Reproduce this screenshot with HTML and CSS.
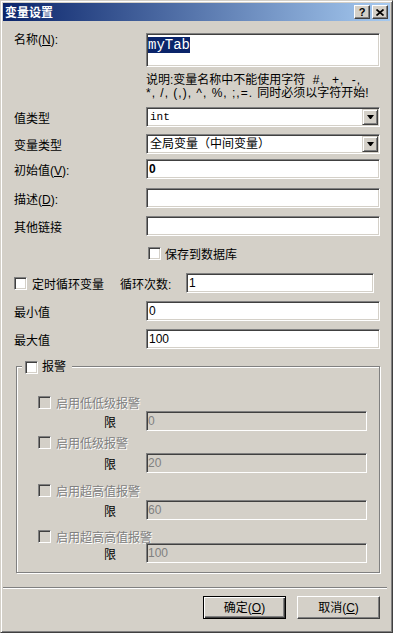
FILE: index.html
```html
<!DOCTYPE html>
<html lang="zh-CN">
<head>
    <meta charset="UTF-8">
    <meta name="viewport" content="width=device-width, initial-scale=1.0">
    <title>变量设置</title>
    <link rel="stylesheet" href="styles.css">
</head>
<body>
    <div class="window">
        <div class="titlebar">
            <span class="title">变量设置</span>
            <div class="title-buttons">
                <span class="tbtn help">?</span>
                <span class="tbtn close">
                    <svg width="8" height="7" viewBox="0 0 8 7"><path d="M0.5 0.5L7.5 6.5M7.5 0.5L0.5 6.5" stroke="#000" stroke-width="1.7" fill="none"/></svg>
                </span>
            </div>
        </div>

        <div class="dialog">
            <div class="row row-name">
                <span class="label">名称(<u>N</u>):</span>
                <div class="field field-name"><span class="selected">myTab</span></div>
            </div>
            <p class="note">说明:变量名称中不能使用字符<span class="chars"> #, +, -,</span><br><span class="chars tight">*, /, (,), ^, %, ;,=. </span>同时必须以字符开始!</p>

            <div class="row row-valtype">
                <span class="label">值类型</span>
                <div class="field select">
                    <span class="value mono">int</span>
                    <span class="drop"><span class="arrow"></span></span>
                </div>
            </div>
            <div class="row row-vartype">
                <span class="label">变量类型</span>
                <div class="field select">
                    <span class="value">全局变量（中间变量）</span>
                    <span class="drop"><span class="arrow"></span></span>
                </div>
            </div>
            <div class="row row-init">
                <span class="label">初始值(<u>V</u>):</span>
                <div class="field"><b>0</b></div>
            </div>
            <div class="row row-desc">
                <span class="label">描述(<u>D</u>):</span>
                <div class="field"></div>
            </div>
            <div class="row row-link">
                <span class="label">其他链接</span>
                <div class="field"></div>
            </div>
            <div class="row row-save">
                <span class="check"></span>
                <span class="check-text">保存到数据库</span>
            </div>

            <div class="row row-loop">
                <div class="loop-check">
                    <span class="check"></span>
                    <span class="check-text">定时循环变量</span>
                </div>
                <span class="loop-label">循环次数:</span>
                <div class="field loop-field">1</div>
            </div>
            <div class="row row-min">
                <span class="label">最小值</span>
                <div class="field">0</div>
            </div>
            <div class="row row-max">
                <span class="label">最大值</span>
                <div class="field">100</div>
            </div>

            <div class="group">
                <div class="legend">
                    <span class="check"></span>
                    <span>报警</span>
                </div>

                <div class="alarm alarm-1">
                    <span class="check off"></span>
                    <span class="disabled">启用低低级报警</span>
                </div>
                <div class="limit limit-1">
                    <span class="label">限</span>
                    <div class="field off">0</div>
                </div>

                <div class="alarm alarm-2">
                    <span class="check off"></span>
                    <span class="disabled">启用低级报警</span>
                </div>
                <div class="limit limit-2">
                    <span class="label">限</span>
                    <div class="field off">20</div>
                </div>

                <div class="alarm alarm-3">
                    <span class="check off"></span>
                    <span class="disabled">启用超高值报警</span>
                </div>
                <div class="limit limit-3">
                    <span class="label">限</span>
                    <div class="field off">60</div>
                </div>

                <div class="alarm alarm-4">
                    <span class="check off"></span>
                    <span class="disabled">启用超高高值报警</span>
                </div>
                <div class="limit limit-4">
                    <span class="label">限</span>
                    <div class="field off">100</div>
                </div>
            </div>

            <div class="separator"></div>

            <div class="buttons">
                <button class="btn default">确定(<u>O</u>)</button>
                <button class="btn">取消(<u>C</u>)</button>
            </div>
        </div>
    </div>
</body>
</html>
```

FILE: styles.css
```css
* {
    margin: 0;
    padding: 0;
    box-sizing: border-box;
}

body {
    background: #d4d0c8;
    font-family: "Liberation Sans", "Noto Sans CJK SC", sans-serif;
    font-size: 12px;
    color: #000;
}

.window {
    width: 393px;
    height: 633px;
    background: #d4d0c8;
    border: 1px solid;
    border-color: #d4d0c8 #404040 #404040 #d4d0c8;
    box-shadow: inset 1px 1px #fff, inset -1px -1px #808080;
    padding: 2px;
    display: flex;
    flex-direction: column;
}

/* title bar */
.titlebar {
    height: 18px;
    flex: none;
    background: linear-gradient(90deg, #0a246a, #a6caf0);
    display: flex;
    align-items: center;
    justify-content: space-between;
    padding: 0 2px;
}

.title {
    color: #fff;
    font-weight: bold;
    line-height: 18px;
    font-family: "Noto Sans CJK SC", sans-serif;
}

.title-buttons {
    display: flex;
    gap: 2px;
}

.tbtn {
    width: 16px;
    height: 14px;
    background: #d4d0c8;
    border: 1px solid;
    border-color: #fff #404040 #404040 #fff;
    box-shadow: inset -1px -1px #808080;
    display: flex;
    align-items: center;
    justify-content: center;
}

.help {
    font-weight: bold;
    font-size: 11px;
    line-height: 12px;
}

/* dialog body */
.dialog {
    flex: 1;
    padding: 12px 10px 0 11px;
}

.row {
    display: flex;
    align-items: center;
}

.label {
    width: 132px;
    flex: none;
}

.field {
    width: 234px;
    height: 20px;
    background: #fff;
    border: 1px solid;
    border-color: #808080 #fff #fff #808080;
    box-shadow: inset 1px 1px #404040, inset -1px -1px #d4d0c8;
    padding: 1px 2px;
    line-height: 16px;
}

.field.off {
    background: #d4d0c8;
    color: #808080;
    padding-left: 1px;
}

.row-name {
    align-items: flex-start;
}

.row-name .label {
    line-height: 14px;
}

.field-name {
    height: 34px;
    padding: 3px 1px 1px;
}

.selected {
    display: inline-block;
    background: #0a246a;
    color: #fff;
    font-family: "Liberation Mono", monospace;
    font-size: 14px;
    line-height: 16px;
}

.note {
    margin: 7px 0 0 132px;
    line-height: 13px;
    white-space: nowrap;
}

.chars {
    letter-spacing: 1px;
    word-spacing: 3px;
}

.chars.tight {
    word-spacing: 0;
}

.select {
    display: flex;
    align-items: center;
    justify-content: space-between;
    padding: 1px;
}

.select .value {
    padding-left: 2px;
}

.mono {
    font-family: "Liberation Mono", monospace;
    font-size: 11px;
}

.drop {
    width: 16px;
    height: 16px;
    background: #d4d0c8;
    border: 1px solid;
    border-color: #d4d0c8 #404040 #404040 #d4d0c8;
    box-shadow: inset 1px 1px #fff, inset -1px -1px #808080;
    display: flex;
    align-items: center;
    justify-content: center;
}

.arrow {
    width: 1px;
    height: 0;
    border-left: 3px solid transparent;
    border-right: 3px solid transparent;
    border-top: 4px solid #000;
    box-sizing: content-box;
}

.row-valtype { margin-top: 7px; }
.row-vartype { margin-top: 7px; }
.row-init { margin-top: 5px; }
.row-desc { margin-top: 9px; }
.row-link { margin-top: 8px; }

.check {
    width: 13px;
    height: 13px;
    flex: none;
    background: #fff;
    border: 1px solid;
    border-color: #808080 #fff #fff #808080;
    box-shadow: inset 1px 1px #404040, inset -1px -1px #d4d0c8;
}

.check.off {
    background: #d4d0c8;
}

.row-save {
    margin-top: 11px;
    padding-left: 134px;
    height: 13px;
    gap: 4px;
}

.row-loop {
    margin-top: 13px;
}

.loop-check {
    width: 106px;
    display: flex;
    align-items: center;
    gap: 5px;
}

.loop-label {
    width: 66px;
}

.loop-field {
    width: 188px;
}

.row-min { margin-top: 8px; }
.row-max { margin-top: 8px; }

/* alarm group */
.group {
    position: relative;
    margin: 17px 0 0 2px;
    width: 364px;
    height: 207px;
    border: 1px solid #808080;
    box-shadow: 1px 1px #fff, inset 1px 1px #fff;
}

.legend {
    position: absolute;
    top: -6px;
    left: 5px;
    height: 13px;
    padding: 0 6px 0 3px;
    background: #d4d0c8;
    display: flex;
    align-items: center;
    gap: 4px;
    line-height: 13px;
}

.alarm {
    display: flex;
    align-items: center;
    gap: 5px;
    height: 13px;
    margin-left: 21px;
}

.disabled {
    color: #808080;
    text-shadow: 1px 1px #fff;
}

.limit {
    display: flex;
    align-items: center;
    margin-left: 87px;
}

.limit .label {
    width: 42px;
}

.limit .field {
    width: 221px;
}

.alarm-1 { margin-top: 29px; }
.limit-1 { margin-top: 2px; }
.alarm-2 { margin-top: 5px; }
.limit-2 { margin-top: 4px; }
.alarm-3 { margin-top: 11px; }
.limit-3 { margin-top: 3px; }
.alarm-4 { margin-top: 10px; }
.limit-4 { margin-top: 0; }

.separator {
    margin: 14px -7px 0 -11px;
    height: 2px;
    border-top: 1px solid #808080;
    border-bottom: 1px solid #fff;
}

.buttons {
    display: flex;
    justify-content: flex-end;
    gap: 11px;
    margin-top: 7px;
}

.btn {
    width: 83px;
    height: 23px;
    background: #d4d0c8;
    border: 1px solid;
    border-color: #fff #404040 #404040 #fff;
    box-shadow: inset -1px -1px #808080;
    font: inherit;
    color: #000;
    line-height: 20px;
    text-align: center;
}

.btn.default {
    border-color: #000;
    box-shadow: inset 1px 1px #fff, inset -1px -1px #404040, inset -2px -2px #808080;
}
```
